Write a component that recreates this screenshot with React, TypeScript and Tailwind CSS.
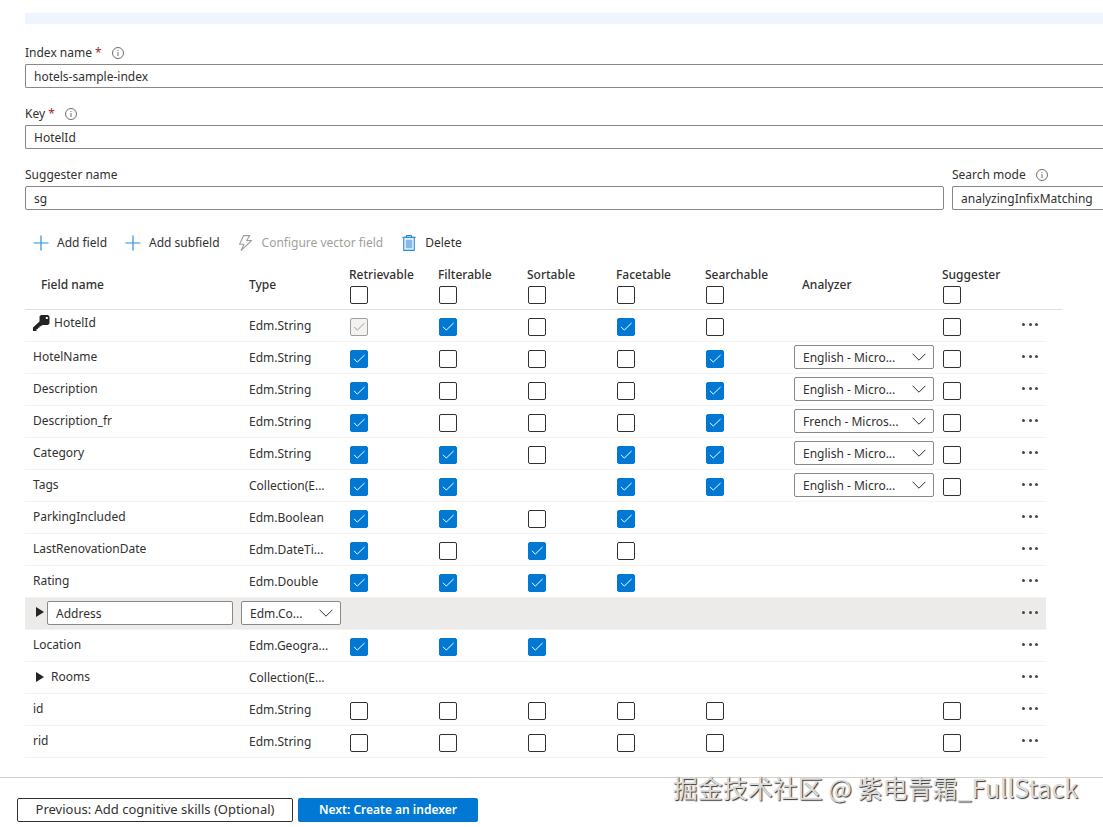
import React from "react";
import clsx from "clsx";

type Mark = "on" | "off" | "locked" | null;

interface Field {
  name: string;
  type: string;
  marks: Mark[];
  analyzer?: string;
  suggester?: boolean;
  isKey?: boolean;
  expandable?: boolean;
  editing?: boolean;
}

const attributes = ["Retrievable", "Filterable", "Sortable", "Facetable", "Searchable"];

const fields: Field[] = [
  { name: "HotelId", type: "Edm.String", marks: ["locked", "on", "off", "on", "off"], suggester: true, isKey: true },
  { name: "HotelName", type: "Edm.String", marks: ["on", "off", "off", "off", "on"], analyzer: "English - Micro...", suggester: true },
  { name: "Description", type: "Edm.String", marks: ["on", "off", "off", "off", "on"], analyzer: "English - Micro...", suggester: true },
  { name: "Description_fr", type: "Edm.String", marks: ["on", "off", "off", "off", "on"], analyzer: "French - Micros...", suggester: true },
  { name: "Category", type: "Edm.String", marks: ["on", "on", "off", "on", "on"], analyzer: "English - Micro...", suggester: true },
  { name: "Tags", type: "Collection(E...", marks: ["on", "on", null, "on", "on"], analyzer: "English - Micro...", suggester: true },
  { name: "ParkingIncluded", type: "Edm.Boolean", marks: ["on", "on", "off", "on", null] },
  { name: "LastRenovationDate", type: "Edm.DateTi...", marks: ["on", "off", "on", "off", null] },
  { name: "Rating", type: "Edm.Double", marks: ["on", "on", "on", "on", null] },
  { name: "Address", type: "Edm.Co...", marks: [null, null, null, null, null], expandable: true, editing: true },
  { name: "Location", type: "Edm.Geogra...", marks: ["on", "on", "on", null, null] },
  { name: "Rooms", type: "Collection(E...", marks: [null, null, null, null, null], expandable: true },
  { name: "id", type: "Edm.String", marks: ["off", "off", "off", "off", "off"], suggester: true },
  { name: "rid", type: "Edm.String", marks: ["off", "off", "off", "off", "off"], suggester: true },
];

/* Icons */
function InfoIcon() {
  return (
    <svg viewBox="0 0 12 12" className="size-3" fill="none" aria-hidden="true">
      <circle cx="6" cy="6" r="5.5" stroke="#605e5c" strokeWidth="0.9" />
      <path d="M6 5v4M6 3v1" stroke="#605e5c" strokeWidth="0.9" />
    </svg>
  );
}

function PlusIcon() {
  return (
    <svg viewBox="0 0 16 16" className="size-4" fill="none" aria-hidden="true">
      <path d="M8 0.5v15M0.5 8h15" stroke="#2b8fdb" strokeWidth="1.2" />
    </svg>
  );
}

function BoltIcon() {
  return (
    <svg viewBox="0 0 16 16" className="size-4" fill="none" aria-hidden="true">
      <path
        d="M5.600 0.600h6.200L8.600 5.500h5L3.200 15.300l2.800-6H1.600z"
        stroke="#a19f9d"
        strokeWidth="1.1"
        strokeLinejoin="round"
      />
    </svg>
  );
}

function TrashIcon() {
  return (
    <svg viewBox="0 0 16 16" className="size-4" fill="none" aria-hidden="true">
      <path d="M5.500 2V0.600h5V2" stroke="#0078d4" />
      <path d="M1.500 2.300h13" stroke="#0078d4" strokeWidth="1.2" />
      <path d="M2.700 2.500h10.600v12.900H2.700z" fill="#e5f2fc" stroke="#2b8fdb" strokeWidth="1.1" />
      <path d="M4.800 4.800h6.400v8.400H4.800z" fill="#83b9eb" />
    </svg>
  );
}

function KeyIcon() {
  return (
    <svg viewBox="0 0 17 16" className="h-4 w-[17px]" aria-hidden="true">
      <path
        d="M8 0h7l1.500 1.500v7L15 10H9.500L8 11.200H6.500v1.500H5V14H3.500v2H0v-3.500L6.500 6.500v-5zM12.800 2v2h2V2z"
        fill="#252423"
        fillRule="evenodd"
      />
    </svg>
  );
}

function Chevron() {
  return (
    <svg viewBox="0 0 14 8" className="pointer-events-none absolute right-2 top-2 h-2 w-3.5" fill="none" aria-hidden="true">
      <path d="M0.600 0.800L7 7.200 13.400 0.800" stroke="#323130" strokeWidth="1" />
    </svg>
  );
}

/* Controls */
function Checkbox({ label, mark = "off" }: { label: string; mark?: Mark }) {
  const locked = mark === "locked";
  return (
    <span className="relative ml-px block size-[18px]">
      <input
        type="checkbox"
        aria-label={label}
        defaultChecked={mark !== "off"}
        disabled={locked}
        className="peer block size-[18px] appearance-none rounded-xs border border-[#323130] bg-white checked:border-[#0078d4] checked:bg-[#0078d4] disabled:border-[#a19f9d] disabled:bg-[#f3f2f1]"
      />
      <svg
        viewBox="0 0 18 18"
        className={clsx(
          "pointer-events-none absolute inset-0 hidden size-[18px] peer-checked:block",
          locked ? "text-[#a19f9d]" : "text-white"
        )}
        fill="none"
        aria-hidden="true"
      >
        <path d="M4 8.800l3.300 3.300L14.600 5" stroke="currentColor" />
      </svg>
    </span>
  );
}

function Dropdown({ label, value }: { label: string; value: string }) {
  return (
    <span className="relative block">
      <select
        aria-label={label}
        className="block h-6 w-full appearance-none rounded-xs border border-[#8a8886] bg-white pl-2 pr-6 pt-px"
      >
        <option>{value}</option>
      </select>
      <Chevron />
    </span>
  );
}

function TextField({ id, label, value, required, info, cut }: {
  id: string;
  label: string;
  value: string;
  required?: boolean;
  info?: boolean;
  cut?: boolean;
}) {
  return (
    <div>
      <div className="flex h-5 items-center">
        <label htmlFor={id}>
          {label}
          {required && <span className="text-[#a4262c]"> *</span>}
        </label>
        {info && (
          <span className="ml-2.5">
            <InfoIcon />
          </span>
        )}
      </div>
      <input
        id={id}
        type="text"
        defaultValue={value}
        className={clsx(
          "mt-px block h-6 w-full border border-[#8a8886] bg-white pl-2",
          cut ? "rounded-l-xs border-r-0" : "rounded-xs"
        )}
      />
    </div>
  );
}

function FieldRow({ field }: { field: Field }) {
  return (
    <tr
      className={clsx(
        "h-8 align-top *:border-b *:border-[#f3f2f1] *:last:border-0",
        field.editing && "*:bg-[#edebe9] *:last:bg-transparent"
      )}
    >
      <td>
        {field.editing ? (
          <div className="flex items-start pl-[11px] pr-2 pt-[3px]">
            <button aria-label="Expand" className="w-[11px] pt-1.5">
              <span className="block w-2 border-y-[5px] border-l-8 border-y-transparent border-l-[#252423]" />
            </button>
            <input
              type="text"
              aria-label="Field name"
              defaultValue={field.name}
              className="h-6 min-w-0 flex-1 rounded-xs border border-[#8a8886] bg-white px-2"
            />
          </div>
        ) : (
          <div className={clsx("flex items-center pl-2 leading-5", field.isKey ? "pt-[3px]" : "pt-[5px]")}>
            {field.isKey && (
              <span className="mr-1">
                <KeyIcon />
              </span>
            )}
            {field.expandable && (
              <button aria-label="Expand" className="ml-[3px] mr-[7px]">
                <span className="block w-2 border-y-[5px] border-l-8 border-y-transparent border-l-[#252423]" />
              </button>
            )}
            {field.name}
          </div>
        )}
      </td>
      <td>
        {field.editing ? (
          <div className="pt-[3px]">
            <Dropdown label="Type" value={field.type} />
          </div>
        ) : (
          <div className="pl-2 pt-1.5 leading-5">{field.type}</div>
        )}
      </td>
      {field.marks.map((mark, i) => (
        <td key={attributes[i]} className="pl-2 pt-2">
          {mark && <Checkbox label={`${field.name} ${attributes[i]}`} mark={mark} />}
        </td>
      ))}
      <td className="pl-2 pt-[3px]">
        {field.analyzer && <Dropdown label={`${field.name} Analyzer`} value={field.analyzer} />}
      </td>
      <td className="pl-2 pt-2">{field.suggester && <Checkbox label={`${field.name} Suggester`} />}</td>
      <td className="pl-2">
        <button aria-label={`More actions for ${field.name}`} className="flex h-7 w-4 items-center justify-between">
          <span className="size-[3px] rounded-full bg-[#484644]" />
          <span className="size-[3px] rounded-full bg-[#484644]" />
          <span className="size-[3px] rounded-full bg-[#484644]" />
        </button>
      </td>
      <td />
    </tr>
  );
}

function FieldsTable() {
  return (
    <table className="w-full table-fixed border-separate border-spacing-0 text-left">
      <thead>
        <tr className="h-[50px] *:border-b *:border-[#e1dfdd] *:font-medium">
          <th className="pl-4">Field name</th>
          <th className="w-[100px] pl-2">Type</th>
          {attributes.map((name) => (
            <th key={name} className="w-[89px] pb-[5px] pl-2 align-bottom">
              <span className="mb-px block leading-5">{name}</span>
              <Checkbox label={`${name} for all fields`} />
            </th>
          ))}
          <th className="w-[148px] pl-4">Analyzer</th>
          <th className="w-20 pb-[5px] pl-2 align-bottom">
            <span className="mb-px block leading-5">Suggester</span>
            <Checkbox label="Suggester for all fields" />
          </th>
          <th className="w-8" />
          <th className="w-4" />
        </tr>
      </thead>
      <tbody>
        {fields.map((field) => (
          <FieldRow key={field.name} field={field} />
        ))}
      </tbody>
    </table>
  );
}

export default function App() {
  return (
    <div className="relative overflow-hidden bg-white pt-[13px] font-['Noto_Sans','Noto_Sans_CJK_SC',sans-serif] text-xs text-[#323130]">
      <main className="pl-[25px]">
        <div className="h-[11px] bg-[#f0f4ff]" />

        {/* Index settings */}
        <div className="mt-[19px] flex flex-col gap-4">
          <TextField id="index-name" label="Index name" value="hotels-sample-index" required info cut />
          <TextField id="key" label="Key" value="HotelId" required info cut />
          <div className="flex gap-2">
            <div className="flex-1">
              <TextField id="suggester-name" label="Suggester name" value="sg" />
            </div>
            <div className="w-[151px]">
              <TextField id="search-mode" label="Search mode" value="analyzingInfixMatching" info cut />
            </div>
          </div>
        </div>

        {/* Toolbar */}
        <div className="mt-[23px] flex h-5 items-center gap-[18px] pl-2">
          <button className="flex items-center gap-2">
            <PlusIcon />
            Add field
          </button>
          <button className="flex items-center gap-2">
            <PlusIcon />
            Add subfield
          </button>
          <button disabled className="flex items-center gap-2 text-[#a19f9d]">
            <BoltIcon />
            Configure vector field
          </button>
          <button className="flex items-center gap-2">
            <TrashIcon />
            Delete
          </button>
        </div>

        <div className="mt-[7px] pr-[41px]">
          <FieldsTable />
        </div>
      </main>

      {/* Wizard navigation */}
      <footer className="mt-[19px] flex gap-[5px] border-t border-[#d2d0ce] pb-[5px] pl-[17px] pt-5">
        <button className="h-6 w-[276px] rounded-xs border border-[#323130] bg-white text-[13px]">
          Previous: Add cognitive skills (Optional)
        </button>
        <button className="h-6 w-[180px] rounded-xs bg-[#0078d4] font-semibold text-white">
          Next: Create an indexer
        </button>
      </footer>

      <div className="pointer-events-none absolute bottom-6 right-[25px] whitespace-nowrap font-['Noto_Sans_CJK_SC',sans-serif] text-[25px] leading-8 text-[#dcdcdc] [text-shadow:1px_1px_1px_#333]">
        掘金技术社区 @ 紫电青霜_FullStack
      </div>
    </div>
  );
}
